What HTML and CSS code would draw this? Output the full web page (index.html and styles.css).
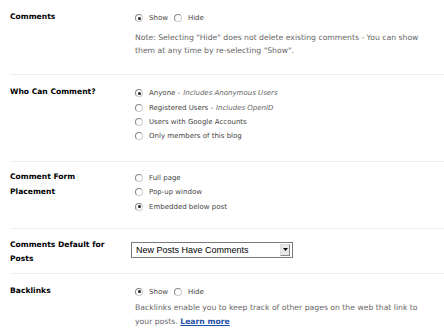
FILE: index.html
```html
<!DOCTYPE html>
<html>
<head>
<meta charset="utf-8">
<link rel="stylesheet" href="styles.css">
</head>
<body>
<div class="settings">
  <div class="row">
    <div class="label">Comments</div>
    <div class="field">
      <div class="inline-radios">
        <span class="opt"><span class="radio checked"></span>Show</span>
        <span class="opt"><span class="radio"></span>Hide</span>
      </div>
      <p class="note">Note: Selecting "Hide" does not delete existing comments - You can show them at any time by re-selecting "Show".</p>
    </div>
  </div>
  <div class="row">
    <div class="label">Who Can Comment?</div>
    <div class="field">
      <div class="opt-row"><span class="radio checked"></span>Anyone - <em>Includes Anonymous Users</em></div>
      <div class="opt-row"><span class="radio"></span>Registered Users - <em>Includes OpenID</em></div>
      <div class="opt-row"><span class="radio"></span>Users with Google Accounts</div>
      <div class="opt-row"><span class="radio"></span>Only members of this blog</div>
    </div>
  </div>
  <div class="row row-tight">
    <div class="label">Comment Form Placement</div>
    <div class="field">
      <div class="opt-row"><span class="radio"></span>Full page</div>
      <div class="opt-row"><span class="radio"></span>Pop-up window</div>
      <div class="opt-row"><span class="radio checked"></span>Embedded below post</div>
    </div>
  </div>
  <div class="row row-select">
    <div class="label">Comments Default for Posts</div>
    <div class="field">
      <div class="select">
        <span class="select-text">New Posts Have Comments</span>
        <span class="select-btn"><svg width="7" height="9" viewBox="0 0 7 9"><path d="M1 3h5L3.5 6z" fill="#000"/></svg></span>
      </div>
    </div>
  </div>
  <div class="row">
    <div class="label">Backlinks</div>
    <div class="field">
      <div class="inline-radios">
        <span class="opt"><span class="radio checked"></span>Show</span>
        <span class="opt"><span class="radio"></span>Hide</span>
      </div>
      <p class="note note-close">Backlinks enable you to keep track of other pages on the web that link to your posts. <a href="#" class="link">Learn more</a></p>
    </div>
  </div>
</div>
</body>
</html>
```

FILE: styles.css
```css
html, body {
  margin: 0;
  padding: 0;
  background: #fff;
}
body {
  font-family: "DejaVu Sans", Verdana, sans-serif;
  color: #333;
}
.settings {
  padding-left: 10px;
}
.row {
  display: grid;
  grid-template-columns: 125px 1fr;
  align-items: start;
  border-top: 1px solid #efefef;
  padding-top: 9px;
}
.row:first-child {
  border-top: none;
}
.label {
  font-weight: bold;
  font-size: 7.6px;
  line-height: 15px;
  color: #000;
  width: 108px;
}
.row-select .label {
  line-height: 14px;
}
.field {
  padding-top: 2px;
  padding-bottom: 17px;
  font-size: 7px;
  color: #444;
}
.row-tight .field {
  padding-top: 0;
  padding-bottom: 14px;
}
.row-select .field {
  padding-bottom: 15px;
}
.row-tight .label {
  margin-top: -2px;
}
.inline-radios {
  display: flex;
  gap: 6px;
  height: 14px;
  align-items: center;
}
.opt {
  display: flex;
  align-items: center;
}
.opt-row {
  display: flex;
  align-items: center;
  height: 14.4px;
  white-space: nowrap;
}
.opt-row em {
  color: #666;
  margin-left: 3px;
}
.radio {
  width: 6px;
  height: 6px;
  border-radius: 50%;
  border: 1px solid #888;
  border-right-color: #ccc;
  border-bottom-color: #ccc;
  background: #fff;
  margin-right: 6px;
  position: relative;
  flex: none;
}
.radio.checked::after {
  content: "";
  position: absolute;
  left: 1.5px;
  top: 1.5px;
  width: 3px;
  height: 3px;
  border-radius: 50%;
  background: #222;
}
.note {
  margin: 6px 0 0;
  font-size: 7.7px;
  line-height: 13px;
  color: #666;
  width: 285px;
}
.note-close {
  margin-top: 2px;
  line-height: 14px;
}
.link {
  color: #1f4fa8;
  font-weight: bold;
  text-decoration: underline;
}
.select {
  margin-top: 2px;
  margin-left: -4px;
  width: 154px;
  height: 14px;
  border: 1px solid #7a7a7a;
  background: #fff;
  display: flex;
  align-items: center;
  justify-content: space-between;
  padding: 0 2px 0 4px;
  box-sizing: content-box;
}
.select-text {
  font-family: "Liberation Sans", Arial, sans-serif;
  font-size: 9px;
  color: #000;
}
.select-btn {
  width: 8px;
  height: 10px;
  border: 1px solid #888;
  border-top-color: #ddd;
  border-left-color: #ddd;
  background: #e8e8e8;
  display: flex;
  align-items: center;
  justify-content: center;
}
```
